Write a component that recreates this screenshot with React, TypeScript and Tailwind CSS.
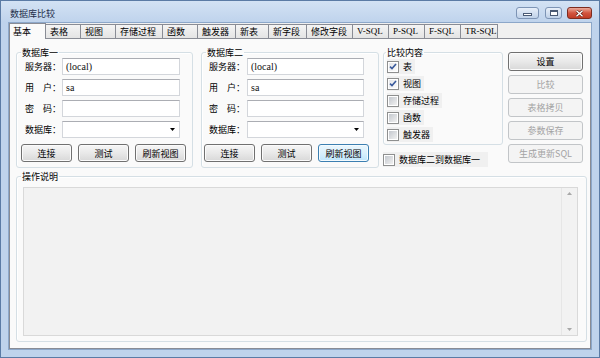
import React from 'react';

const tabs: [string, string][] = [
  ['表格', 'w-[36px]'],
  ['视图', 'w-[36px]'],
  ['存储过程', 'w-[48px]'],
  ['函数', 'w-[36px]'],
  ['触发器', 'w-[39px]'],
  ['新表', 'w-[34px]'],
  ['新字段', 'w-[39px]'],
  ['修改字段', 'w-[47px]'],
  ['V-SQL', 'w-[37px]'],
  ['P-SQL', 'w-[37px]'],
  ['F-SQL', 'w-[37px]'],
  ['TR-SQL', 'w-[38px]'],
];

const Button = ({
  label,
  className = '',
  hot = false,
  disabled = false,
}: {
  label: string;
  className?: string;
  hot?: boolean;
  disabled?: boolean;
}) => {
  let look =
    'border-[#707070] bg-gradient-to-b from-[#f6f6f6] via-[#e9e9e9] to-[#d8d8d8] shadow-[inset_0_0_0_1px_#fbfbfb] text-black';
  if (hot)
    look =
      'border-[#3c7fb1] bg-gradient-to-b from-[#eaf6fd] via-[#d9f0fc] to-[#bee6fd] shadow-[inset_0_0_0_1px_#f4fbfe] text-black';
  if (disabled) look = 'border-[#c2c5c8] bg-[#f4f4f4] text-[#a3a3a3]';
  return (
    <div className={`flex items-center justify-center rounded-[3px] border ${look} ${className}`}>
      {label}
    </div>
  );
};

const Field = ({
  label,
  value = '',
  combo = false,
  labelW,
}: {
  label: string;
  value?: string;
  combo?: boolean;
  labelW: string;
}) => (
  <div className="flex items-center h-[17px]">
    <span className={`${labelW} shrink-0 whitespace-pre`}>{label}</span>
    <div className="flex-1 h-full flex items-center bg-white border border-[#d3d6db] border-t-[#abadb3] pl-[3px]">
      <span className="font-['Liberation_Serif',serif] text-[10px] leading-none text-[#111]">{value}</span>
      {combo && (
        <svg className="ml-auto mr-[4px]" width="5" height="3" viewBox="0 0 5 3">
          <path d="M0 0H5L2.5 3Z" fill="#000" />
        </svg>
      )}
    </div>
  </div>
);

const DbGroup = ({
  title,
  boxW,
  fieldPad,
  labelW,
  btnPad,
  hot = false,
}: {
  title: string;
  boxW: string;
  fieldPad: string;
  labelW: string;
  btnPad: string;
  hot?: boolean;
}) => (
  <fieldset
    className={`${boxW} min-w-0 m-0 px-0 pt-0 pb-[5px] border border-[#d5dfe5] rounded-[3px] shadow-[inset_1px_1px_0_#ffffff]`}
  >
    <legend className="ml-[4px] px-[1px] leading-[11px]">{title}</legend>
    <div className={`flex flex-col gap-[4px] ${fieldPad}`}>
      <Field label="服务器：" value="(local)" labelW={labelW} />
      <Field label="用　户：" value="sa" labelW={labelW} />
      <Field label="密　码：" labelW={labelW} />
      <Field label="数据库：" combo labelW={labelW} />
    </div>
    <div className={`flex gap-[6px] mt-[6px] ${btnPad}`}>
      <Button label="连接" className="w-[51px] h-[18px]" />
      <Button label="测试" className="w-[51px] h-[18px]" />
      <Button label="刷新视图" className="w-[51px] h-[18px]" hot={hot} />
    </div>
  </fieldset>
);

const Check = ({ checked = false }: { checked?: boolean }) => (
  <span className="w-[12px] h-[12px] shrink-0 flex border border-[#8e8f8f] bg-white p-[1px]">
    <span
      className={`flex-1 flex items-center justify-center bg-gradient-to-br ${
        checked ? 'from-[#e4e6ea] to-[#fbfbfb]' : 'from-[#c4c8ce] to-[#f1f1f1]'
      }`}
    >
      {checked && (
        <svg width="8" height="7" viewBox="0 0 8 7">
          <path d="M1 3.6L3 5.6L7 1" fill="none" stroke="#3a5a9c" strokeWidth="1.6" />
        </svg>
      )}
    </span>
  </span>
);

const CheckItem = ({ label, checked = false, className = '' }: { label: string; checked?: boolean; className?: string }) => (
  <div className={`h-[15px] flex items-center gap-[4px] bg-[#f0f0f0] pr-[3px] ${className}`}>
    <Check checked={checked} />
    <span>{label}</span>
  </div>
);

export default function App() {
  return (
    <div className="w-[600px] h-[358px] flex flex-col overflow-hidden border border-[#5b7ba5] bg-[#bfd3ec] font-['Noto_Sans_CJK_SC','Noto_Sans',sans-serif] text-[9px] leading-[11px] text-black">
      {/* title bar */}
      <div className="h-[21px] shrink-0 flex items-start pl-[9px] pr-[7px] bg-gradient-to-b from-[#d3e2f4] to-[#bfd3ec]">
        <span className="flex-1 mt-[7px] text-[#1e2f4a]">数据库比较</span>
        <div className="flex items-start mt-[6px]">
          <div className="w-[23px] h-[12px] rounded-[3px] border border-[#7d94b5] bg-gradient-to-b from-[#e8eff9] to-[#bfd1e8] flex items-end justify-center pb-[2px]">
            <span className="w-[9px] h-[3px] bg-white border border-[#4a5a74]" />
          </div>
          <div className="w-[17px] h-[12px] ml-[6px] rounded-[3px] border border-[#7d94b5] bg-gradient-to-b from-[#e8eff9] to-[#bfd1e8] flex items-center justify-center">
            <span className="w-[8px] h-[6px] bg-white border border-[#4a5a74] border-t-2" />
          </div>
          <div className="w-[25px] h-[12px] ml-[5px] rounded-[3px] border border-[#7d2b1f] bg-gradient-to-b from-[#e9a99b] via-[#d2543f] to-[#c13c26] flex items-center justify-center">
            <svg width="9" height="7" viewBox="0 0 9 7">
              <path d="M1.5 0.8L7.5 6.2M7.5 0.8L1.5 6.2" stroke="#5a1a12" strokeWidth="2.6" />
              <path d="M1.5 0.8L7.5 6.2M7.5 0.8L1.5 6.2" stroke="#ffffff" strokeWidth="1.4" />
            </svg>
          </div>
        </div>
      </div>

      {/* client */}
      <div className="flex-1 mx-[7px] mb-[7px] border border-[#8ca7c9] bg-[#f0f0f0] flex flex-col">
        <div className="h-[15px] shrink-0 flex items-end">
          <div className="relative z-10 w-[37px] h-[16px] -mb-[1px] border border-b-0 border-[#898c95] bg-[#fafafa] pl-[3px] pt-[2px]">
            基本
          </div>
          {tabs.map(([label, w]) => (
            <div
              key={label}
              className={`${w} h-[14px] -ml-[1px] border border-b-0 border-[#898c95] bg-gradient-to-b from-[#f4f4f4] to-[#e4e4e4] pl-[4px] pt-[1px] whitespace-nowrap ${
                label.includes('SQL') ? "font-['Liberation_Serif',serif]" : ''
              }`}
            >
              {label}
            </div>
          ))}
        </div>

        <div className="flex-1 border border-[#898c95] bg-[#fafafa] pl-[6px] pt-[8px]">
          <div className="flex items-start">
            <DbGroup title="数据库一" boxW="w-[177px]" fieldPad="pl-[8px] pr-[12px]" labelW="w-[37px]" btnPad="pl-[4px]" />
            <div className="ml-[8px]">
              <DbGroup title="数据库二" boxW="w-[178px]" fieldPad="pl-[7px] pr-[14px]" labelW="w-[38px]" btnPad="pl-[2px]" hot />
            </div>

            <div className="ml-[4px] w-[120px] flex flex-col">
              <fieldset className="min-w-0 m-0 px-0 pt-0 pb-[1px] border border-[#d5dfe5] rounded-[3px] shadow-[inset_1px_1px_0_#ffffff]">
                <legend className="ml-[2px] px-[1px] leading-[11px]">比较内容</legend>
                <div className="flex flex-col pl-[3px]">
                  {[
                    ['表', true],
                    ['视图', true],
                    ['存储过程', false],
                    ['函数', false],
                    ['触发器', false],
                  ].map(([label, checked]) => (
                    <div key={label as string} className="h-[17px] flex items-center">
                      <CheckItem label={label as string} checked={checked as boolean} />
                    </div>
                  ))}
                </div>
              </fieldset>
              <CheckItem label="数据库二到数据库一" className="mt-[7px] w-[105px]" />
            </div>

            <div className="ml-[5px] mt-[5px] w-[75px] flex flex-col gap-[4px]">
              <Button label="设置" className="h-[19px]" />
              <Button label="比较" className="h-[19px]" disabled />
              <Button label="表格拷贝" className="h-[19px]" disabled />
              <Button label="参数保存" className="h-[19px]" disabled />
              <Button label="生成更新SQL" className="h-[19px]" disabled />
            </div>
          </div>

          <fieldset className="w-[571px] min-w-0 mt-[3px] mx-0 mb-0 px-0 pt-0 pb-[5px] border border-[#d5dfe5] rounded-[3px] shadow-[inset_1px_1px_0_#ffffff]">
            <legend className="ml-[4px] px-[1px] leading-[11px]">操作说明</legend>
            <div className="ml-[6px] mt-[5px] w-[555px] h-[149px] flex justify-end border border-[#d9d9d9] bg-[#f2f2f2]">
              <div className="w-[16px] h-full border-l border-[#e6e6e6] flex flex-col items-center justify-between py-[4px]">
                <svg width="5" height="3" viewBox="0 0 5 3">
                  <path d="M0 3H5L2.5 0Z" fill="#a8a8a8" />
                </svg>
                <svg width="5" height="3" viewBox="0 0 5 3">
                  <path d="M0 0H5L2.5 3Z" fill="#a8a8a8" />
                </svg>
              </div>
            </div>
          </fieldset>
        </div>
      </div>
    </div>
  );
}
